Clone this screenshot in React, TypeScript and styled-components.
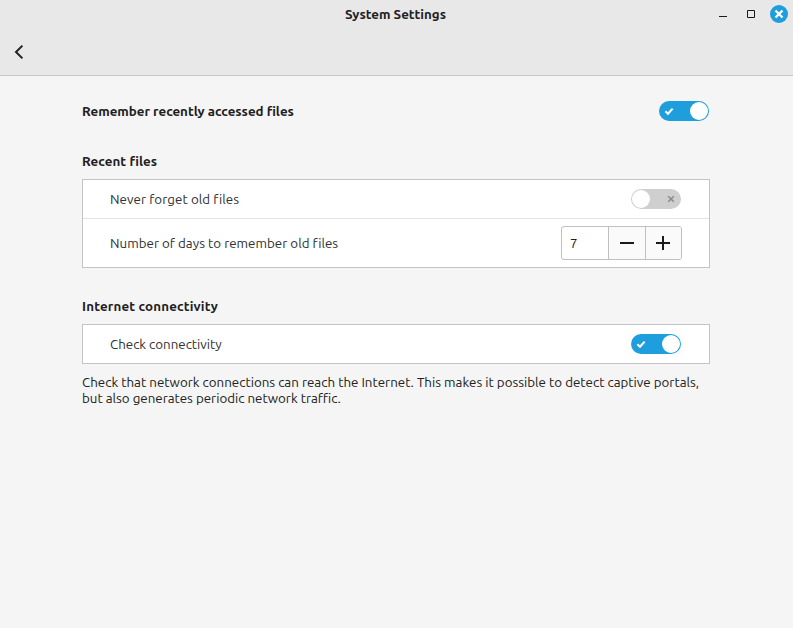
import React from "react";
import styled, { createGlobalStyle } from "styled-components";

const GlobalStyle = createGlobalStyle`
  * { box-sizing: border-box; }
  body {
    margin: 0;
    background: #f5f5f5;
    color: #202020;
    font-family: Ubuntu, "Noto Sans", sans-serif;
    font-size: 13.333px;
    line-height: 16px;
  }
  button { padding: 0; border: 0; background: none; color: inherit; font: inherit; }
  svg { display: block; }
`;

const Window = styled.div`
  display: flex;
  flex-direction: column;
  height: 628px;
  overflow: hidden;
`;

const Header = styled.header`
  height: 76px;
  background: #e8e8e8;
  border-bottom: 1px solid #c8c8c8;
`;

const TitleBar = styled.div`
  display: grid;
  grid-template-columns: 1fr auto 1fr;
  align-items: center;
  height: 28px;
  padding: 0 5px 0 3px;
`;

const Title = styled.h1`
  display: flex;
  grid-column: 2;
  margin: 0;
  font-size: inherit;
  font-weight: 700;
`;

const WindowControls = styled.div`
  display: flex;
  justify-content: flex-end;
  gap: 10px;
`;

const ControlButton = styled.button<{ $close?: boolean }>`
  width: 18px;
  height: 18px;
  border-radius: 50%;
  color: ${(p) => (p.$close ? "#fff" : "#1a1a1a")};
  background: ${(p) => (p.$close ? "#1f9ede" : "transparent")};
`;

const Toolbar = styled.div`
  display: flex;
  align-items: center;
  height: 48px;
  padding-left: 11px;
`;

const BackButton = styled.button`
  width: 16px;
  height: 16px;
`;

const Content = styled.main`
  display: flex;
  flex-direction: column;
  width: 628px;
  margin-left: 82px;
  padding-top: 25px;
`;

const MasterRow = styled.div`
  display: flex;
  align-items: center;
  justify-content: space-between;
  height: 20px;
  padding-right: 1px;
  font-weight: 700;
`;

const Section = styled.section<{ $top: number }>`
  margin-top: ${(p) => p.$top}px;
`;

const Heading = styled.h2`
  display: flex;
  margin: 0 0 10px;
  font-size: inherit;
  font-weight: 700;
`;

const Card = styled.div`
  background: #fff;
  border: 1px solid #c4c4c4;
`;

const Row = styled.div<{ $tall?: boolean }>`
  display: flex;
  align-items: center;
  justify-content: space-between;
  height: ${(p) => (p.$tall ? 48 : 38)}px;
  padding: 0 ${(p) => (p.$tall ? 27 : 28)}px 0 27px;
  color: #303030;
  & + & {
    height: 49px;
    border-top: 1px solid #e4e4e4;
  }
`;

const Text = styled.span<{ $track?: number }>`
  display: block;
  margin: 1px 0 -1px;
  letter-spacing: ${(p) => p.$track ?? 0}px;
  white-space: nowrap;
`;

const Note = styled.p`
  display: flex;
  flex-direction: column;
  margin: 10px 0 0;
`;

const Switch = styled.button<{ $on: boolean }>`
  display: flex;
  flex-direction: ${(p) => (p.$on ? "row" : "row-reverse")};
  align-items: center;
  justify-content: space-between;
  width: 50px;
  height: 20px;
  padding: ${(p) => (p.$on ? "0 1px 0 5px" : "0 5px 0 1px")};
  border-radius: 10px;
  background: ${(p) => (p.$on ? "#1f9ede" : "#cfcfcf")};
  color: ${(p) => (p.$on ? "#fff" : "#8c8c8c")};
`;

const Knob = styled.span`
  width: 18px;
  height: 18px;
  border-radius: 50%;
  background: #fff;
`;

const Spin = styled.div`
  display: flex;
  width: 121px;
  height: 34px;
  border: 1px solid #c0c0c0;
  border-radius: 3px;
  overflow: hidden;
`;

const SpinValue = styled.div`
  display: flex;
  align-items: center;
  width: 46px;
  padding-left: 8px;
  color: #202020;
`;

const SpinButton = styled.button<{ $width: number }>`
  display: flex;
  align-items: center;
  padding-left: ${(p) => p.$width - 26}px;
  width: ${(p) => p.$width}px;
  border-left: 1px solid #c0c0c0;
  background: #fafafa;
  color: #1a1a1a;
`;

function Toggle({ on, label }: { on: boolean; label: string }) {
  return (
    <Switch $on={on} role="switch" aria-checked={on} aria-label={label}>
      <svg width="10" height="10" fill="none" stroke="currentColor">
        {on ? (
          <path d="M1.4 5.2 4 7.7 8.6 2.6" strokeWidth="2.1" />
        ) : (
          <path d="M2.2 2.2 7.8 7.8M7.8 2.2 2.2 7.8" strokeWidth="1.6" />
        )}
      </svg>
      <Knob />
    </Switch>
  );
}

export default function App() {
  return (
    <Window>
      <GlobalStyle />
      <Header>
        <TitleBar>
          <Title><Text>System Settings</Text></Title>
          <WindowControls>
            <ControlButton aria-label="Minimize">
              <svg width="18" height="18"><path d="M5 11h8v1H5z" fill="currentColor" /></svg>
            </ControlButton>
            <ControlButton aria-label="Maximize">
              <svg width="18" height="18" fill="none" stroke="currentColor">
                <path d="M5.5 5.5h7v7h-7z" />
              </svg>
            </ControlButton>
            <ControlButton $close aria-label="Close">
              <svg width="18" height="18" stroke="currentColor" strokeWidth="2.3">
                <path d="M5.5 5.5 12.5 12.5M12.5 5.5 5.5 12.5" />
              </svg>
            </ControlButton>
          </WindowControls>
        </TitleBar>
        <Toolbar>
          <BackButton aria-label="Back">
            <svg width="16" height="16" fill="none" stroke="currentColor" strokeWidth="2">
              <path d="M11.4 1.6 5 8l6.4 6.4" />
            </svg>
          </BackButton>
        </Toolbar>
      </Header>
      <Content>
        <MasterRow>
          <Text>Remember recently accessed files</Text>
          <Toggle on label="Remember recently accessed files" />
        </MasterRow>
        <Section $top={32}>
          <Heading><Text $track={0.08}>Recent files</Text></Heading>
          <Card>
            <Row>
              <Text $track={0.07}>Never forget old files</Text>
              <Toggle on={false} label="Never forget old files" />
            </Row>
            <Row $tall>
              <Text $track={0.02}>Number of days to remember old files</Text>
              <Spin>
                <SpinValue><Text>7</Text></SpinValue>
                <SpinButton $width={37} aria-label="Decrease">
                  <svg width="14" height="14" fill="currentColor"><path d="M0 6h14v2H0z" /></svg>
                </SpinButton>
                <SpinButton $width={36} aria-label="Increase">
                  <svg width="14" height="14" fill="currentColor"><path d="M0 6h14v2H0zM6 0h2v14H6z" /></svg>
                </SpinButton>
              </Spin>
            </Row>
          </Card>
        </Section>
        <Section $top={30}>
          <Heading><Text $track={0.19}>Internet connectivity</Text></Heading>
          <Card>
            <Row>
              <Text>Check connectivity</Text>
              <Toggle on label="Check connectivity" />
            </Row>
          </Card>
          <Note>
            <Text $track={0.015}>Check that network connections can reach the Internet. This makes it possible to detect captive portals,</Text>
            <Text>but also generates periodic network traffic.</Text>
          </Note>
        </Section>
      </Content>
    </Window>
  );
}
